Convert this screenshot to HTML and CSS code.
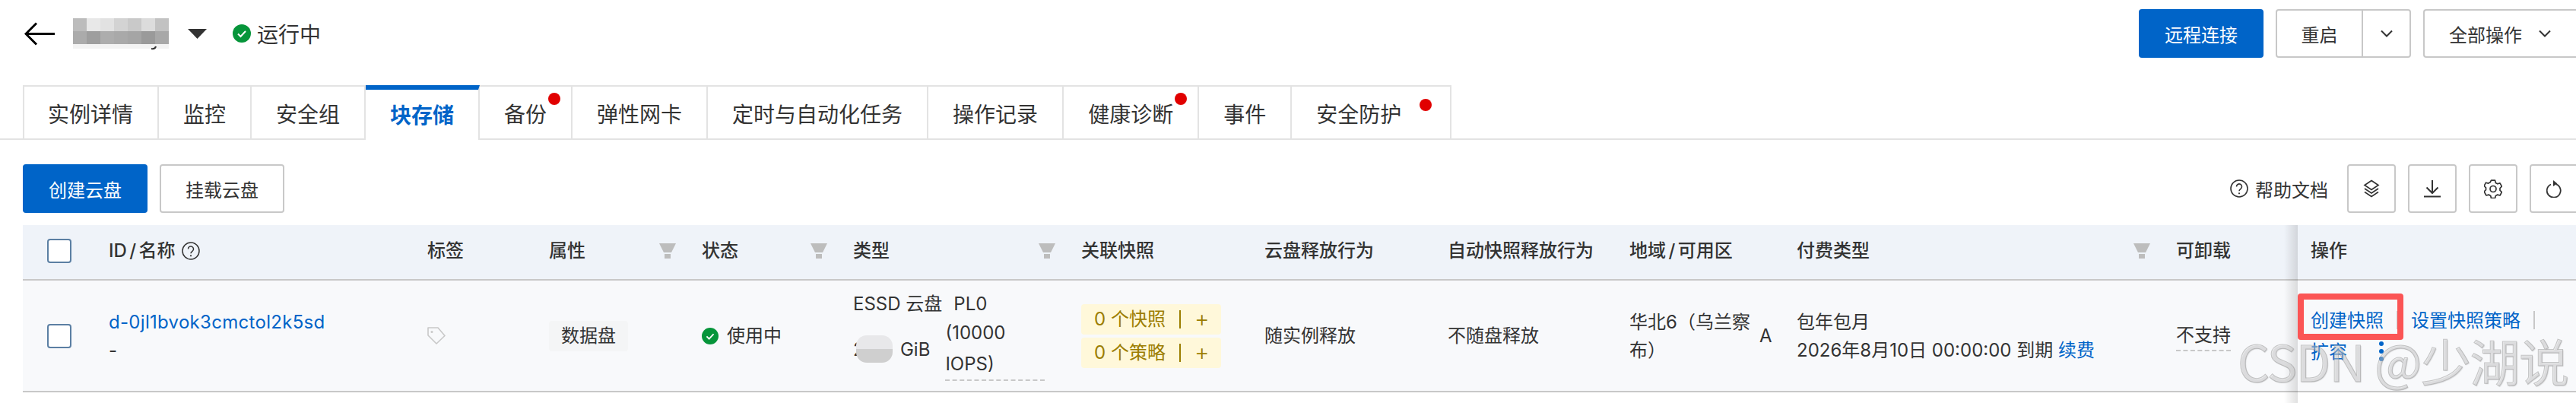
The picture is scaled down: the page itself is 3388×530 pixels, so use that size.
FILE: index.html
```html
<!DOCTYPE html>
<html lang="zh-CN">
<head>
<meta charset="utf-8">
<title>块存储</title>
<link rel="stylesheet" href="styles.css">
</head>
<body>
<svg class="defs" width="0" height="0" aria-hidden="true">
  <symbol id="filter" viewBox="0 0 22 20"><path d="M0 0H22L16 12H6Z M7 14H15V20H7Z" fill="#bdbdbd"/></symbol>
  <symbol id="ok" viewBox="0 0 24 24"><circle cx="12" cy="12" r="12" fill="#06953a"/><path d="M7 12.5l3.5 3.5L17 9" fill="none" stroke="#fff" stroke-width="2"/></symbol>
  <symbol id="chev" viewBox="0 0 16 10"><path d="M1 1.5l7 7 7-7" fill="none" stroke="#333" stroke-width="2"/></symbol>
</svg>

<header class="topbar">
  <div class="title">
    <svg class="back" width="41" height="31" viewBox="0 0 41 31"><path d="M40 15.5H3M16 1.5L2 15.5l14 14" fill="none" stroke="#000" stroke-width="3"/></svg>
    <svg class="mosaic" width="126" height="44" viewBox="0 0 126 44">
      <rect x="0" y="36" width="126" height="6" fill="#f3f3f3"/>
      <rect x="0" y="2" width="18" height="17" fill="#bcbcbc"/><rect x="18" y="2" width="18" height="17" fill="#e8e8e8"/><rect x="36" y="2" width="18" height="17" fill="#e2e2e2"/><rect x="54" y="2" width="18" height="17" fill="#d3d3d3"/><rect x="72" y="2" width="18" height="17" fill="#c9c9c9"/><rect x="90" y="2" width="18" height="17" fill="#dcdcdc"/><rect x="108" y="2" width="18" height="17" fill="#c2c2c2"/>
      <rect x="0" y="19" width="18" height="17" fill="#ababab"/><rect x="18" y="19" width="18" height="17" fill="#9e9e9e"/><rect x="36" y="19" width="18" height="17" fill="#adadad"/><rect x="54" y="19" width="18" height="17" fill="#a9a9a9"/><rect x="72" y="19" width="18" height="17" fill="#a5a5a5"/><rect x="90" y="19" width="18" height="17" fill="#9a9a9a"/><rect x="108" y="19" width="18" height="17" fill="#a8a8a8"/>
      <path d="M103 42q5 1 6-3" fill="none" stroke="#333" stroke-width="2"/>
    </svg>
    <svg class="caret" width="25" height="13" viewBox="0 0 25 13"><path d="M0 0H25L12.5 13Z" fill="#333"/></svg>
    <svg class="status-icon" width="24" height="24"><use href="#ok"/></svg>
    <span class="status-text">运行中</span>
  </div>
  <div class="actions">
    <button class="btn btn-primary btn-remote">远程连接</button>
    <div class="split">
      <span class="split-main">重启</span>
      <span class="split-arrow"><svg width="16" height="10"><use href="#chev"/></svg></span>
    </div>
    <button class="btn btn-all">全部操作<svg width="16" height="10"><use href="#chev"/></svg></button>
  </div>
</header>

<nav class="tabs">
  <a class="tab tab-first">实例详情</a>
  <a class="tab">监控</a>
  <a class="tab">安全组</a>
  <a class="tab tab-active">块存储</a>
  <a class="tab">备份<i class="dot"></i></a>
  <a class="tab">弹性网卡</a>
  <a class="tab">定时与自动化任务</a>
  <a class="tab">操作记录</a>
  <a class="tab">健康诊断<i class="dot"></i></a>
  <a class="tab">事件</a>
  <a class="tab tab-wide">安全防护<i class="dot dot-low"></i></a>
</nav>

<section class="toolbar">
  <div class="toolbar-left">
    <button class="btn btn-primary btn-create">创建云盘</button>
    <button class="btn btn-attach">挂载云盘</button>
  </div>
  <div class="toolbar-right">
    <a class="help">
      <svg width="24" height="24" viewBox="0 0 24 24"><circle cx="12" cy="12" r="11" fill="none" stroke="#333" stroke-width="1.6"/><path d="M8.5 9.5a3.5 3.5 0 1 1 5.500 2.800c-1.300.9-2 1.500-2 3" fill="none" stroke="#333" stroke-width="1.6"/><circle cx="12" cy="18.300" r="1.100" fill="#333"/></svg>
      帮助文档
    </a>
    <button class="icon-btn"><svg width="22" height="24" viewBox="0 0 22 24"><path d="M11 1.500l9 6-9 6-9-6zM2 12l9 6 9-6M2 16.500l9 6 9-6" fill="none" stroke="#333" stroke-width="1.700"/></svg></button>
    <button class="icon-btn"><svg width="22" height="24" viewBox="0 0 22 24"><path d="M11 1v17M3.500 10.500L11 18l7.500-7.500M0 22.500h22" fill="none" stroke="#333" stroke-width="2"/></svg></button>
    <button class="icon-btn"><svg width="24" height="25" viewBox="0 0 24 25"><path d="M9.500 1.200h5l.8 3.200 2.500 1.400 3.200-.9 2.400 4.300-2.400 2.300v2.900l2.400 2.300-2.400 4.300-3.200-.9-2.500 1.400-.8 3.200h-5l-.8-3.200-2.500-1.400-3.200.9L.1 16l2.400-2.300v-2.900L.1 8.500l2.400-4.300 3.200.9 2.500-1.400z" fill="none" stroke="#333" stroke-width="1.700" stroke-linejoin="round"/><circle cx="12" cy="12.500" r="4" fill="none" stroke="#333" stroke-width="1.700"/></svg></button>
    <button class="icon-btn"><svg width="20" height="24" viewBox="0 0 20 24"><path d="M6 6.500A9 9 0 1 0 13 6.300" fill="none" stroke="#333" stroke-width="1.800"/><path d="M9 1l5.500 4.500L9 9z" fill="#333"/></svg></button>
  </div>
</section>

<div class="table-wrap">
  <table class="disks">
    <colgroup>
      <col class="c-check"><col class="c-id"><col class="c-tag"><col class="c-attr"><col class="c-state"><col class="c-type"><col class="c-snap"><col class="c-rel"><col class="c-auto"><col class="c-region"><col class="c-pay"><col class="c-unmount"><col class="c-op">
    </colgroup>
    <thead>
      <tr>
        <th class="cell-check"><span class="checkbox"></span></th>
        <th><span class="id-head">ID / 名称<svg width="24" height="24" viewBox="0 0 24 24"><circle cx="12" cy="12" r="11" fill="none" stroke="#333" stroke-width="1.500"/><path d="M8.500 9.500a3.500 3.500 0 1 1 5.500 2.800c-1.300.9-2 1.500-2 3" fill="none" stroke="#333" stroke-width="1.500"/><circle cx="12" cy="18.300" r="1.100" fill="#333"/></svg></span></th>
        <th>标签</th>
        <th><span class="head-filter">属性<svg width="22" height="20"><use href="#filter"/></svg></span></th>
        <th><span class="head-filter">状态<svg width="22" height="20"><use href="#filter"/></svg></span></th>
        <th><span class="head-filter">类型<svg width="22" height="20"><use href="#filter"/></svg></span></th>
        <th>关联快照</th>
        <th>云盘释放行为</th>
        <th>自动快照释放行为</th>
        <th>地域 / 可用区</th>
        <th><span class="head-filter">付费类型<svg width="22" height="20"><use href="#filter"/></svg></span></th>
        <th>可卸载</th>
        <th class="cell-op">操作</th>
      </tr>
    </thead>
    <tbody>
      <tr>
        <td class="cell-check"><span class="checkbox"></span></td>
        <td><a class="link link-id">d-0jl1bvok3cmctol2k5sd</a><div>-</div></td>
        <td><svg class="tag-icon" width="24" height="23" viewBox="0 0 24 23"><path d="M1 1H14L23 11.500 12 22 1 11Z" fill="none" stroke="#c8c8c8" stroke-width="1.600" stroke-linejoin="round"/><circle cx="6" cy="6.500" r="1.500" fill="#c8c8c8"/></svg></td>
        <td><span class="chip">数据盘</span></td>
        <td><span class="state"><svg width="22" height="22"><use href="#ok"/></svg>使用中</span></td>
        <td>
          <div class="disk-line1">ESSD 云盘<span class="disk-pl">PL0</span></div>
          <div class="disk-line2">
            <span class="size-digit">2</span><span class="size-blur"></span><span class="gib">GiB</span>
            <span class="iops">(10000 IOPS)</span>
          </div>
        </td>
        <td>
          <div class="snap"><span class="snap-text">0 个快照</span><i class="snap-sep"></i><span class="snap-plus">+</span></div>
          <div class="snap"><span class="snap-text">0 个策略</span><i class="snap-sep"></i><span class="snap-plus">+</span></div>
        </td>
        <td>随实例释放</td>
        <td>不随盘释放</td>
        <td>
          <div class="region"><span class="region-name">华北6（乌兰察布）</span><span class="region-zone">A</span></div>
        </td>
        <td>包年包月<div class="expiry">2026年8月10日 00:00:00 到期 <a class="link">续费</a></div></td>
        <td><span class="dashed">不支持</span></td>
        <td class="cell-op">
          <div class="op-line"><a class="link">创建快照</a><i class="op-sep"></i><a class="link">设置快照策略</a><i class="op-sep"></i></div>
          <div class="op-line"><a class="link">扩容</a><svg class="more" width="8" height="28" viewBox="0 0 8 28"><circle cx="4" cy="4" r="3" fill="#0064c8"/><circle cx="4" cy="14" r="3" fill="#0064c8"/><circle cx="4" cy="24" r="3" fill="#0064c8"/></svg></div>
          <span class="highlight"></span>
        </td>
      </tr>
    </tbody>
  </table>
  <span class="fixed-shadow"></span>
</div>

<div class="watermark">CSDN @少湖说</div>
</body>
</html>
```

FILE: styles.css
```css
* { box-sizing: border-box; }

html, body {
  margin: 0;
  height: 530px;
  overflow: hidden;
  background: #fff;
}

body {
  position: relative;
  color: #333;
  font-family: "Inter", "Noto Sans CJK SC", sans-serif;
  font-size: 24px;
}

.defs { position: absolute; }

button { font: inherit; color: inherit; background: #fff; cursor: pointer; }

/* top bar */
.topbar {
  display: flex;
  justify-content: space-between;
  padding-top: 12px;
  height: 112px;
}

.title {
  display: flex;
  align-items: center;
  height: 64px;
  padding-left: 32px;
  font-size: 28px;
}

.back { margin-right: 23px; }
.mosaic { margin-right: 25px; }
.caret { margin-right: 34px; }
.status-icon { margin-right: 8px; }

.actions { display: flex; gap: 16px; }

.btn {
  height: 64px;
  border: 2px solid #c8c8c8;
  border-radius: 4px;
  padding: 0;
}

.btn-primary {
  background: #0064c8;
  border-color: #0064c8;
  color: #fff;
}

.btn-remote { width: 164px; }

.split {
  display: flex;
  width: 178px;
  height: 64px;
  border: 2px solid #c8c8c8;
  border-radius: 4px;
}

.split-main {
  width: 113px;
  display: flex;
  align-items: center;
  justify-content: center;
  border-right: 2px solid #c8c8c8;
}

.split-arrow {
  flex: 1;
  display: flex;
  align-items: center;
  justify-content: center;
}

.btn-all {
  width: 201px;
  display: flex;
  align-items: center;
  padding-left: 32px;
  gap: 22px;
  border-radius: 4px 0 0 4px;
  border-right-width: 0;
}

/* tabs */
.tabs {
  display: flex;
  height: 72px;
  padding-left: 30px;
  border-bottom: 2px solid #e3e3e3;
  font-size: 28px;
}

.tab {
  position: relative;
  display: flex;
  align-items: center;
  flex: none;
  height: 72px;
  padding: 0 32px;
  white-space: nowrap;
  border-top: 2px solid #e3e3e3;
  border-right: 2px solid #e3e3e3;
}

.tab-first { border-left: 2px solid #e3e3e3; padding-left: 31px; }
.tab-wide { padding-right: 64px; }

.tab-active {
  color: #0064c8;
  font-weight: 700;
  background: #fff;
  border-top: 6px solid #0064c8;
  padding-bottom: 2px;
}

.dot {
  position: absolute;
  top: 8px;
  right: 14px;
  width: 16px;
  height: 16px;
  border-radius: 50%;
  background: #e10000;
}

.dot-low { top: 16px; right: 24px; }

/* toolbar */
.toolbar {
  display: flex;
  justify-content: space-between;
  padding: 32px 0 16px 30px;
}

.toolbar-left { display: flex; gap: 16px; }
.btn-create, .btn-attach { width: 164px; }

.toolbar-right {
  display: flex;
  align-items: center;
  gap: 16px;
  margin-right: -3px;
}

.help {
  display: flex;
  align-items: center;
  gap: 9px;
  margin-right: 9px;
}

.icon-btn {
  width: 64px;
  height: 64px;
  display: flex;
  align-items: center;
  justify-content: center;
  padding: 0;
  border: 2px solid #c8c8c8;
  border-radius: 4px;
}

/* table */
.table-wrap {
  position: relative;
  margin-left: 30px;
  height: 234px;
}

.disks {
  width: 3358px;
  table-layout: fixed;
  border-collapse: separate;
  border-spacing: 0;
}

.c-check { width: 89px; }
.c-id { width: 419px; }
.c-tag { width: 160px; }
.c-attr { width: 201px; }
.c-state { width: 199px; }
.c-type { width: 300px; }
.c-snap { width: 241px; }
.c-rel { width: 241px; }
.c-auto { width: 239px; }
.c-region { width: 220px; }
.c-pay { width: 499px; }
.c-unmount { width: 184px; }
.c-op { width: 366px; }

.disks th, .disks td {
  padding: 0 24px;
  text-align: left;
  line-height: 37px;
  border-bottom: 2px solid #c8c8c8;
}

.disks th {
  height: 73px;
  padding-right: 10px;
  padding-bottom: 4px;
  background: #eff3f9;
  font-weight: 500;
  white-space: nowrap;
  word-spacing: -3px;
}

.disks td {
  height: 147px;
  background: #f8f9fb;
}

.disks .cell-check { padding: 0 0 0 32px; }
.disks th.cell-check { padding-bottom: 4px; }

.disks .cell-op {
  position: relative;
  padding-left: 17px;
  padding-right: 0;
}

.fixed-shadow {
  position: absolute;
  top: 0;
  bottom: 0;
  right: 366px;
  width: 18px;
  background: linear-gradient(to left, rgba(0, 0, 0, .12), rgba(0, 0, 0, 0));
}

.checkbox {
  display: block;
  width: 32px;
  height: 32px;
  background: #fff;
  border: 2px solid #5b7fa3;
  border-radius: 4px;
}

.id-head { display: flex; align-items: center; gap: 8px; }
.head-filter { display: flex; align-items: center; justify-content: space-between; }

.link { color: #0064c8; }
.link-id { letter-spacing: .3px; }

.tag-icon { display: block; }

.chip {
  display: inline-block;
  height: 40px;
  line-height: 40px;
  padding: 0 16px;
  background: #f4f5f6;
  border-radius: 4px;
}

.state { display: flex; align-items: center; gap: 11px; }

.disk-line1 { display: flex; height: 35px; line-height: 35px; }
.disk-pl { margin-left: 15px; }

.disk-line2 { display: flex; align-items: center; }
.size-digit { width: 15px; }
.size-blur {
  width: 54px;
  height: 36px;
  margin-left: -11px;
  border-radius: 14px;
  background: linear-gradient(#e8e8ea 50%, #cfcfcf 50%);
}
.gib { margin-left: 10px; }
.iops {
  width: 146px;
  margin-left: 20px;
  line-height: 41px;
  border-bottom: 2px dashed #c8c8c8;
}

.snap {
  display: flex;
  align-items: center;
  width: 184px;
  height: 40px;
  padding-left: 17px;
  color: #9c7d00;
  background: #fff8da;
  border-radius: 4px;
}
.snap + .snap { margin-top: 4px; }
.snap-text { width: 112px; white-space: nowrap; }
.snap-sep { width: 2px; height: 24px; background: #9c7d00; }
.snap-plus { margin-left: 18px; font-size: 30px; font-weight: 300; }

.region { display: flex; align-items: center; }
.region-name { width: 171px; flex: none; }
.region-zone { flex: none; }

.expiry { white-space: nowrap; }

.dashed {
  display: inline-block;
  line-height: 38px;
  border-bottom: 2px dashed #c8c8c8;
}

.op-line {
  display: flex;
  align-items: center;
  height: 41px;
  white-space: nowrap;
}

.op-sep {
  width: 2px;
  height: 24px;
  margin: 0 17px;
  background: #c8c8c8;
}

.more { margin-left: 41px; }

.highlight {
  position: absolute;
  left: 0;
  top: 17px;
  width: 139px;
  height: 61px;
  border: 8px solid #fb5555;
  border-radius: 4px;
}

.watermark {
  position: absolute;
  left: 2943px;
  top: 428px;
  font-family: "Noto Sans CJK SC", sans-serif;
  font-size: 66px;
  line-height: 90px;
  letter-spacing: -1.5px;
  white-space: nowrap;
  color: rgba(225, 225, 225, .35);
  -webkit-text-stroke: 1px rgba(150, 150, 150, .5);
  text-shadow: 1px 1px 1px rgba(120, 120, 120, .25);
}
```
